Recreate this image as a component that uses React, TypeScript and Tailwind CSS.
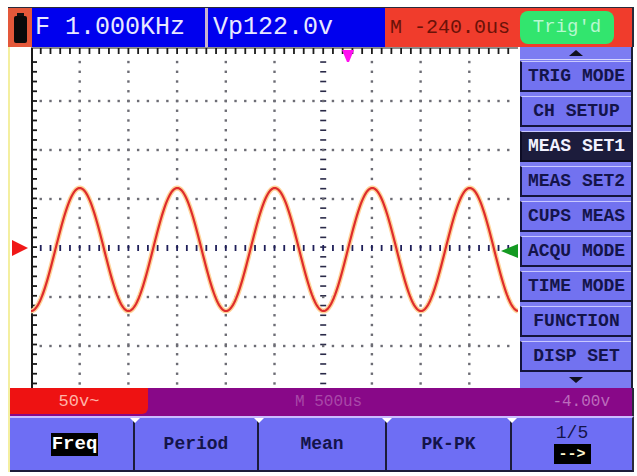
import React from "react";

const W = 487;
const H = 341;
const DIV = 48.7;
const STEP = DIV / 5;
const H_LINES = [54, 103, 152, 201, 250, 299];
const CENTER_Y = 201;
const CENTER_X_IDX = 6;

function range(from: number, to: number, step: number) {
  const out: number[] = [];
  for (let v = from; v <= to; v += step) out.push(v);
  return out;
}

function ScopeGrid() {
  const vLines = range(1, 9, 1).map((k) => k * DIV);
  const yTicks = range(54 - STEP * 5, H, STEP).filter((y) => y > 6);

  let wave = "";
  for (let x = 0; x <= W; x += 1) {
    const y = 202.5 + 61.5 * Math.cos((2 * Math.PI * x) / 97.5);
    wave += (x === 0 ? "M" : "L") + x + "," + y.toFixed(2) + " ";
  }

  return (
    <svg width={W} height={H} viewBox={`0 0 ${W} ${H}`} className="block shrink-0">
      {/* dotted verticals */}
      {vLines.map((x, i) =>
        i + 1 === CENTER_X_IDX
          ? yTicks.map((y) => (
              <line key={`cv${y}`} x1={x - 3} x2={x + 3} y1={y} y2={y} stroke="#2a2a48" strokeWidth={1.6} />
            ))
          : yTicks.map((y) => <rect key={`v${i}-${y}`} x={x - 1.2} y={y - 1.2} width={2.4} height={2.4} fill="#6c6c74" />)
      )}
      {/* dotted horizontals */}
      {H_LINES.map((y) =>
        range(STEP, W, STEP).map((x) =>
          y === CENTER_Y ? (
            <line key={`ch${x}`} x1={x} x2={x} y1={y - 3} y2={y + 3} stroke="#20205a" strokeWidth={1.8} />
          ) : (
            <rect key={`h${y}-${x}`} x={x - 1.2} y={y - 1.2} width={2.4} height={2.4} fill="#6c6c74" />
          )
        )
      )}
      {/* frame ticks */}
      <line x1={0} x2={W} y1={1} y2={1} stroke="#1a1a1a" strokeWidth={1} />
      {range(0, W, STEP).map((x) => (
        <line key={`tt${x}`} x1={x} x2={x} y1={1} y2={7} stroke="#1a1a1a" strokeWidth={1.8} />
      ))}
      <line x1={1} x2={1} y1={1} y2={H} stroke="#1a1a1a" strokeWidth={2} />
      {yTicks.map((y) => (
        <line key={`lt${y}`} x1={0} x2={6} y1={y} y2={y} stroke="#1a1a1a" strokeWidth={1.8} />
      ))}
      {/* waveform */}
      <path d={wave} fill="none" stroke="#ffd49a" strokeWidth={5} strokeLinejoin="round" />
      <path d={wave} fill="none" stroke="#de2c2c" strokeWidth={2.2} strokeLinejoin="round" />
      {/* trigger position */}
      <path d="M311,3 L323,3 L318,15 L316,15 Z" fill="#ff10f0" />
      {/* trigger level */}
      <path d="M470,204 L487,197 L487,211 Z" fill="#149a22" />
    </svg>
  );
}

const MENU = [
  "TRIG MODE",
  "CH SETUP",
  "MEAS SET1",
  "MEAS SET2",
  "CUPS MEAS",
  "ACQU MODE",
  "TIME MODE",
  "FUNCTION",
  "DISP SET",
];

function SideMenu() {
  return (
    <div className="flex h-full w-[113px] flex-col bg-[#7c7cf2] border-r-2 border-[#1c1c34] font-['Liberation_Mono',monospace]">
      <div className="flex h-[13px] items-center justify-center border-b border-[#d8d8ff]">
        <div className="h-0 w-0 border-x-[7px] border-b-[6px] border-x-transparent border-b-[#101020]" />
      </div>
      <div className="flex flex-col gap-[4px] pt-[1px]">
        {MENU.map((m) => (
          <div
            key={m}
            className={
              m === "MEAS SET1"
                ? "flex h-[31px] items-center justify-center whitespace-nowrap border-t border-b-2 border-l-2 border-t-[#c8c8ff] border-b-[#0c0c24] border-l-[#0c0c24] bg-[#1c1c3c] text-[18px] font-bold text-[#f2f2ff]"
                : "flex h-[31px] items-center justify-center whitespace-nowrap border-t border-b-2 border-l-2 border-t-[#c8c8ff] border-b-[#14143c] border-l-[#14143c] bg-[#7272f0] text-[18px] font-bold text-[#14144a]"
            }
          >
            {m}
          </div>
        ))}
      </div>
      <div className="flex flex-1 items-center justify-center">
        <div className="h-0 w-0 border-x-[7px] border-t-[6px] border-x-transparent border-t-[#101020]" />
      </div>
    </div>
  );
}

const BUTTONS = [
  { w: "w-[123px]", label: "Freq" },
  { w: "w-[124px]", label: "Period" },
  { w: "w-[128px]", label: "Mean" },
  { w: "w-[125px]", label: "PK-PK" },
];

function Notch() {
  return (
    <div className="absolute -left-[5px] top-0 h-0 w-0 border-x-[5px] border-t-[5px] border-x-transparent border-t-white" />
  );
}

export default function App() {
  return (
    <div className="h-[476px] w-[637px] overflow-hidden bg-white pl-[8px] pt-[7px] font-['Liberation_Mono',monospace]">
      <div className="flex w-[626px] flex-col">
        {/* top status bar */}
        <div className="flex h-[40px] border-t border-r-2 border-[#2a2a3a]">
          <div className="flex w-[24px] items-center justify-center bg-[#e4583a]">
            <div className="flex flex-col items-center">
              <div className="h-[3px] w-[7px] bg-[#111]" />
              <div className="h-[27px] w-[13px] rounded-[2px] bg-[#0a0a0a]" />
            </div>
          </div>
          <div className="flex w-[173px] items-center bg-[#0000ee] pl-[3px] text-[25px] leading-none text-[#e8e8ff]">
            F 1.000KHz
          </div>
          <div className="w-[3px] bg-[#c8b4d0]" />
          <div className="flex w-[177px] items-center bg-[#0000ee] pl-[5px] text-[25px] leading-none text-[#e8e8ff]">
            Vp122.0v
          </div>
          <div className="flex flex-1 items-center justify-between bg-[#f03c2c] pl-[5px] pr-[18px]">
            <span className="text-[20px] leading-none text-[#6a1208]">M -240.0us</span>
            <span className="flex h-[33px] w-[94px] items-center justify-center rounded-lg bg-[#32e56e] text-[19px] leading-none text-[#b8f8d0]">
              Trig'd
            </span>
          </div>
        </div>

        <div className="flex flex-col border-l-2 border-[#f4efa0]">
          {/* scope body */}
          <div className="flex h-[341px]">
            <div className="flex w-[21px] flex-col pt-[193px]">
              <svg width="18" height="16" viewBox="0 0 18 16" className="ml-[2px] block">
                <path d="M0,0 L16,8 L0,16 Z" fill="#f01818" />
              </svg>
            </div>
            <ScopeGrid />
            <div className="w-[2px]" />
            <SideMenu />
          </div>

          {/* purple status strip */}
          <div className="flex h-[28px] items-center bg-[#880888] border-r-2 border-[#2a2a3a]">
            <div className="flex h-[26px] w-[138px] items-center justify-center self-start rounded-br-md bg-[#ee1212] text-[17px] leading-none text-[#ffb4a8]">
              50v~
            </div>
            <span className="ml-[147px] text-[16px] leading-none text-[#a848a8]">M 500us</span>
            <span className="ml-auto pr-[22px] text-[16px] leading-none text-[#bc6cbc]">-4.00v</span>
          </div>

          {/* soft buttons */}
          <div className="flex h-[56px] border-t-2 border-b-2 border-r-2 border-t-[#cbbcff] border-b-[#1c1c3a] border-r-[#2a2a3a] bg-[#6e6ef4]">
            {BUTTONS.map((b, i) => (
              <div
                key={b.label}
                className={
                  i === 0
                    ? `relative flex ${b.w} items-center justify-center`
                    : `relative flex ${b.w} items-center justify-center border-l-2 border-[#1c1c3a]`
                }
              >
                {i > 0 && <Notch />}
                {b.label === "Freq" ? (
                  <span className="ml-[6px] bg-black px-[1px] py-[2px] text-[19px] font-bold leading-none text-white">
                    Freq
                  </span>
                ) : (
                  <span className="text-[18px] font-bold leading-none text-[#14144a]">{b.label}</span>
                )}
              </div>
            ))}
            <div className="relative flex flex-1 flex-col items-center justify-center gap-[2px] border-l-2 border-[#1c1c3a]">
              <Notch />
              <span className="text-[18px] leading-none text-[#14144a]">1/5</span>
              <span className="flex h-[20px] w-[37px] items-center justify-center bg-black text-[15px] font-bold leading-none text-[#fff8d0]">
                --&gt;
              </span>
            </div>
          </div>
        </div>
      </div>
    </div>
  );
}
